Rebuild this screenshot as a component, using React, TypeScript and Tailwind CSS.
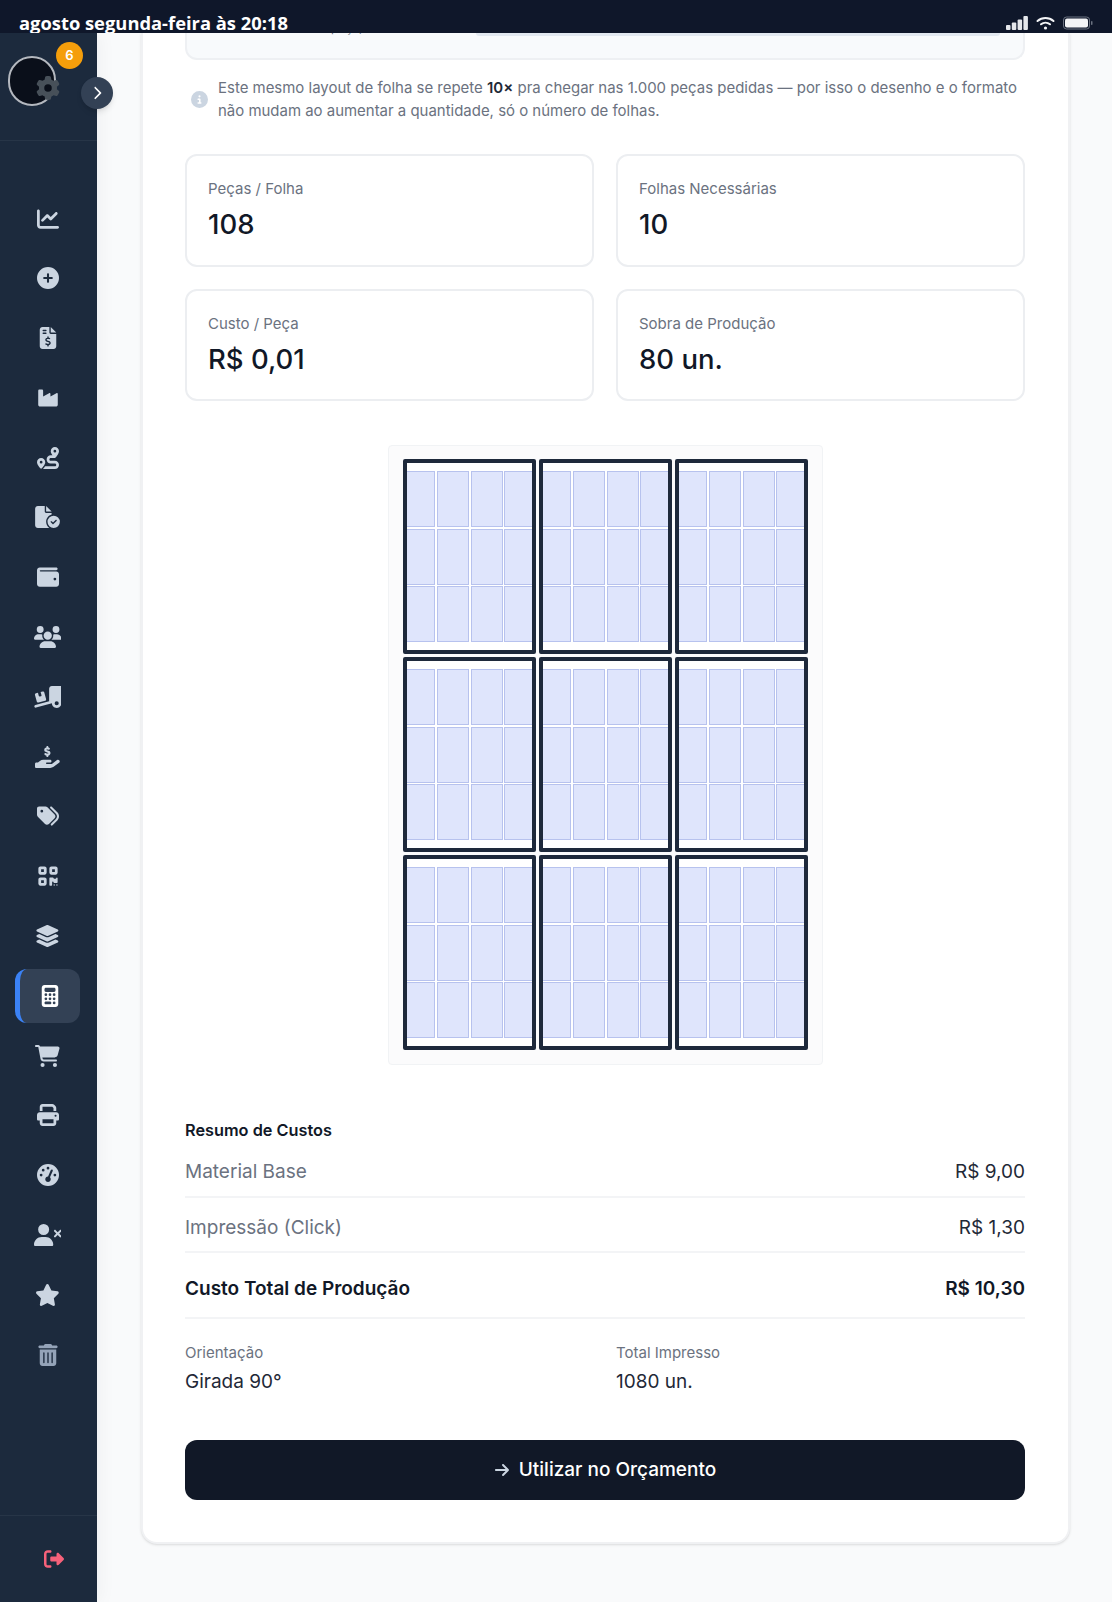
import React from 'react';
import {
  FaArrowRight,
  FaCalculator,
  FaCartShopping,
  FaChartLine,
  FaChevronRight,
  FaCircleInfo,
  FaCirclePlus,
  FaFileCircleCheck,
  FaFileInvoiceDollar,
  FaGaugeHigh,
  FaGear,
  FaHandHoldingDollar,
  FaIndustry,
  FaLayerGroup,
  FaPrint,
  FaQrcode,
  FaRightFromBracket,
  FaRoute,
  FaStar,
  FaTags,
  FaTrashCan,
  FaTruckRampBox,
  FaUsers,
  FaUserXmark,
  FaWallet,
} from 'react-icons/fa6';

const NAV_ITEMS = [
  { icon: FaChartLine, w: 'w-[22px]' },
  { icon: FaCirclePlus, w: 'w-[22px]' },
  { icon: FaFileInvoiceDollar, w: 'w-[22px]' },
  { icon: FaIndustry, w: 'w-[22px]' },
  { icon: FaRoute, w: 'w-[22px]' },
  { icon: FaFileCircleCheck, w: 'w-[27px]' },
  { icon: FaWallet, w: 'w-[22px]' },
  { icon: FaUsers, w: 'w-[27.5px]' },
  { icon: FaTruckRampBox, w: 'w-[27.5px]' },
  { icon: FaHandHoldingDollar, w: 'w-[24.75px]' },
  { icon: FaTags, w: 'w-[22px]' },
  { icon: FaQrcode, w: 'w-[22px]' },
  { icon: FaLayerGroup, w: 'w-[24.75px]' },
  { icon: FaCalculator, w: 'w-[22px]', active: true },
  { icon: FaCartShopping, w: 'w-[24.75px]' },
  { icon: FaPrint, w: 'w-[22px]' },
  { icon: FaGaugeHigh, w: 'w-[22px]' },
  { icon: FaUserXmark, w: 'w-[27.5px]' },
  { icon: FaStar, w: 'w-[24.75px]' },
  { icon: FaTrashCan, w: 'w-[22px]', dim: true },
];

const STATS = [
  { label: 'Peças / Folha', value: '108' },
  { label: 'Folhas Necessárias', value: '10' },
  { label: 'Custo / Peça', value: 'R$ 0,01' },
  { label: 'Sobra de Produção', value: '80 un.' },
];

function StatusBar() {
  return (
    <div className="relative z-20 flex h-[33px] shrink-0 items-end justify-between overflow-hidden bg-[#0f172a] pl-[19px] pr-[19px]">
      <span className="-mb-[4px] text-[18.35px] font-bold leading-[28px] text-white [font-family:'Open_Sans',sans-serif]">
        agosto segunda-feira às 20:18
      </span>
      <div className="mb-[3px] flex items-center gap-[8px]">
        <svg width="22" height="14" viewBox="0 0 22 14" fill="#e5e7eb">
          <rect x="0" y="9" width="4.5" height="5" rx="1" />
          <rect x="5.8" y="6.5" width="4.5" height="7.5" rx="1" />
          <rect x="11.6" y="3.5" width="4.5" height="10.5" rx="1" />
          <rect x="17.4" y="0" width="4.5" height="14" rx="1" />
        </svg>
        <svg width="19" height="14" viewBox="0 0 19 14" fill="none" stroke="#f3f4f6" strokeWidth="2" strokeLinecap="round">
          <path d="M1.5 5C6 1 13 1 17.5 5" />
          <path d="M5 8.3c2.6-2.2 6.4-2.2 9 0" />
          <circle cx="9.5" cy="12" r="1.6" fill="#f3f4f6" stroke="none" />
        </svg>
        <svg width="30" height="14" viewBox="0 0 30 14" fill="none">
          <rect x="0.5" y="1" width="26" height="12" rx="3" stroke="#6b7280" />
          <rect x="2" y="2.5" width="23" height="9" rx="2" fill="#f3f4f6" />
          <rect x="28" y="5" width="1.5" height="4" rx="0.7" fill="#6b7280" />
        </svg>
      </div>
    </div>
  );
}

function Sidebar() {
  return (
    <aside className="relative z-10 flex w-[97px] shrink-0 flex-col bg-[#1c2a3d] shadow-[4px_0_16px_rgba(15,23,42,0.04)]">
      <div className="relative h-[108px] shrink-0 border-b border-white/5">
        <div className="relative ml-[8px] mt-[23px] h-[50px] w-[48px] rounded-full border-2 border-[#b4b8bf] bg-[#0a0f1a]">
          <FaGear className="absolute left-[26px] top-[18px] h-[24px] w-[24px] text-[#475059]" />
        </div>
        <span className="absolute left-[56px] top-[9px] flex h-[27px] w-[27px] items-center justify-center rounded-full bg-[#f59e0b] text-[13px] font-semibold text-white">
          6
        </span>
        <button
          type="button"
          className="absolute left-[81px] top-[44px] flex h-[32px] w-[32px] items-center justify-center rounded-full bg-[#334155] text-white shadow-md"
        >
          <FaChevronRight className="h-[14px] w-[14px]" />
        </button>
      </div>

      <nav className="flex flex-1 flex-col items-start gap-[5.8px] pl-[15px] pt-[50.5px]">
        {NAV_ITEMS.map((item, i) => {
          const Icon = item.icon;
          return (
            <div
              key={i}
              className={
                item.active
                  ? 'flex h-[54px] w-[65px] shrink-0 items-center justify-center rounded-xl border-l-[5px] border-[#3b82f6] bg-[#334155] text-white'
                  : `flex h-[54px] w-[65px] shrink-0 items-center justify-center rounded-xl ${item.dim ? 'text-[#94a3b8]' : 'text-[#cbd5e1]'}`
              }
            >
              <Icon className={`h-[22px] ${item.w}`} />
            </div>
          );
        })}
      </nav>

      <div className="flex h-[87px] shrink-0 justify-center border-t border-white/5 pl-[10px] pt-[33px]">
        <FaRightFromBracket className="h-[20px] w-[22px] text-[#f6617a]" />
      </div>
    </aside>
  );
}

function Sheet() {
  return (
    <div className="h-[195px] w-[133px] overflow-hidden rounded-[2px] border-4 border-[#1e293b] bg-white pt-[8px]">
      <div className="-ml-[3.2px] grid w-[133px] grid-cols-4 gap-[1.5px]">
        {Array.from({ length: 12 }).map((_, i) => (
          <div key={i} className="h-[56px] border border-[#b7c2ee] bg-[#dfe5fc]" />
        ))}
      </div>
    </div>
  );
}

function CostRow({ label, value }: { label: string; value: string }) {
  return (
    <div className="flex h-[55.5px] items-center justify-between border-b-2 border-gray-100 pt-[7px] text-[19px]">
      <span className="text-[#6b7280]">{label}</span>
      <span className="text-[#1f2937]">{value}</span>
    </div>
  );
}

export default function App() {
  return (
    <div className="flex h-[1602px] w-[1112px] flex-col overflow-hidden bg-[#f9fafb] [font-family:Inter,sans-serif]">
      <StatusBar />
      <div className="flex min-h-0 flex-1">
        <Sidebar />
        <main className="min-w-0 flex-1 overflow-hidden pl-[44px] pr-[42px]">
          <div className="rounded-b-2xl border-2 border-t-0 border-[#f0f1f3] bg-white pb-[42px] pl-[42px] pr-[43px] shadow-sm">
            {/* Top box, scrolled under the status bar */}
            <div className="flex h-[27px] items-start rounded-b-xl border-2 border-t-0 border-[#eef0f3] bg-[#f8fafc] pl-[144px] pr-[23px]">
              <span className="-mt-[15px] text-[12px] leading-[20px] text-[#6b7280]">peça,</span>
              <div className="ml-auto h-[3px] w-[524px] rounded-b bg-[#e2e8f0]" />
            </div>

            <div className="flex items-center gap-[10px] pl-[6px] pt-[17px]">
              <FaCircleInfo className="h-[17px] w-[17px] shrink-0 text-[#cbd5e1]" />
              <p className="text-[14.96px] leading-[22.5px] text-[#6b7280]">
                Este mesmo layout de folha se repete <strong className="font-semibold text-[#1f2937]">10×</strong> pra chegar nas 1.000 peças pedidas — por isso o desenho e o formato não mudam ao aumentar a quantidade, só o número de folhas.
              </p>
            </div>

            <div className="mt-[32px] grid grid-cols-2 gap-[22px]">
              {STATS.map((stat) => (
                <div key={stat.label} className="h-[112.5px] rounded-xl border-2 border-[#eceef1] bg-white px-[21px] pt-[22px]">
                  <div className="text-[15px] leading-[22px] text-[#6b7280]">{stat.label}</div>
                  <div className="mt-[6px] text-[27.5px] font-medium leading-[36px] text-[#111827]">{stat.value}</div>
                </div>
              ))}
            </div>

            <div className="mt-[44px] flex justify-center">
              <div className="grid grid-cols-[repeat(3,133px)] gap-[3px] rounded border border-[#f1f3f5] bg-[#fbfbfc] px-[14px] pb-[14px] pt-[13px]">
                {Array.from({ length: 9 }).map((_, i) => (
                  <Sheet key={i} />
                ))}
              </div>
            </div>

            <h3 className="mb-[1px] mt-[54px] text-[16.3px] font-semibold leading-[22px] text-[#111827]">Resumo de Custos</h3>
            <CostRow label="Material Base" value="R$ 9,00" />
            <CostRow label="Impressão (Click)" value="R$ 1,30" />
            <div className="flex h-[66px] items-center justify-between border-b-2 border-gray-100 pt-[8px] text-[19px] font-semibold text-[#111827]">
              <span>Custo Total de Produção</span>
              <span>R$ 10,30</span>
            </div>

            <div className="mt-[23px] grid grid-cols-2 gap-[22px]">
              <div>
                <div className="text-[15px] leading-[22px] text-[#6b7280]">Orientação</div>
                <div className="mt-[4px] text-[19px] leading-[28px] text-[#1f2937]">Girada 90°</div>
              </div>
              <div>
                <div className="text-[15px] leading-[22px] text-[#6b7280]">Total Impresso</div>
                <div className="mt-[4px] text-[19px] leading-[28px] text-[#1f2937]">1080 un.</div>
              </div>
            </div>

            <button
              type="button"
              className="mt-[44px] flex h-[60px] w-full items-center justify-center gap-[9px] rounded-xl bg-[#111827] text-[19px] font-medium text-white"
            >
              <FaArrowRight className="h-[16px] w-[16px] text-[#cbd5e1]" />
              Utilizar no Orçamento
            </button>
          </div>
        </main>
      </div>
    </div>
  );
}
